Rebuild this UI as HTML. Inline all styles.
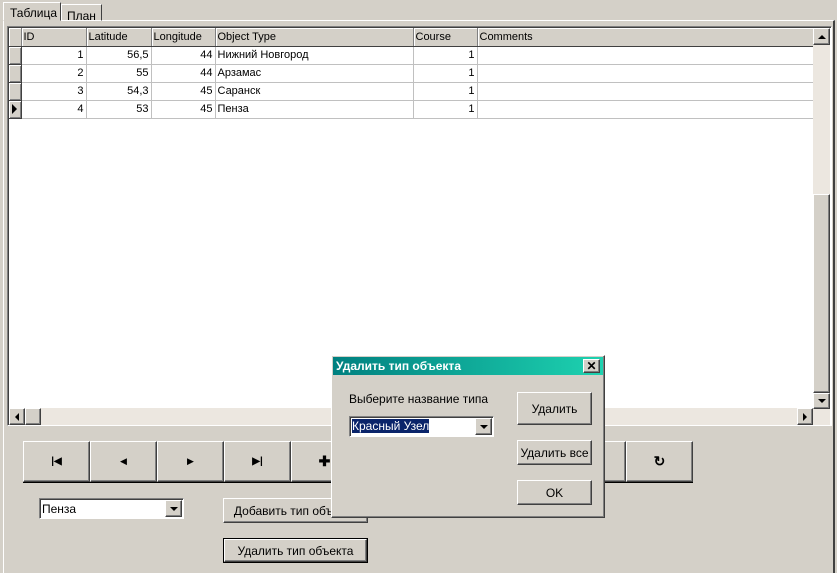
<!DOCTYPE html>
<html><head><meta charset="utf-8"><style>
*{box-sizing:border-box;margin:0;padding:0}
body{width:837px;height:573px;background:#d4d0c8;font-family:"Liberation Sans",sans-serif;font-size:11px;position:relative;overflow:hidden;color:#000}
.a{position:absolute}
.raised{background:#d4d0c8;border:1px solid;border-color:#fff #404040 #404040 #fff;box-shadow:inset -1px -1px 0 #808080}
.sunk{border:1px solid;border-color:#808080 #fff #fff #808080;box-shadow:inset 1px 1px 0 #404040}
table{border-collapse:collapse;table-layout:fixed;position:absolute;left:9px;top:28px}
td{height:18px;border-right:1px solid #c0c0c0;border-bottom:1px solid #c0c0c0;padding:0 2px;white-space:nowrap;overflow:hidden;background:#fff}
tr.h td{background:#d4d0c8;border-color:#404040;border-right:1px solid #808080;box-shadow:inset 1px 1px 0 #fff;height:18px}
td.ind{background:#d4d0c8;box-shadow:inset 1px 1px 0 #fff,inset -1px -1px 0 #808080;border-color:#404040}
.r{text-align:right}
.btn{text-align:center;display:flex;align-items:center;justify-content:center}
.arrow{width:0;height:0;border-style:solid}
</style></head><body>
<!-- tabs -->
<div class="a" style="left:3px;top:20px;width:832px;height:553px;border-left:1px solid #fff;border-top:1px solid #fff;border-right:2px solid #404040"></div>
<div class="a" style="left:61px;top:4px;width:41px;height:17px;border:1px solid;border-color:#fff #404040 transparent #fff;padding:4px 0 0 5px;font-size:12px">План</div>
<div class="a" style="left:3px;top:2px;width:58px;height:19px;border:1px solid;border-color:#fff #404040 transparent #fff;background:#d4d0c8;padding:3px 0 0 6px;font-size:12px">Таблица</div>
<!-- grid -->
<div class="a sunk" style="left:7px;top:26px;width:825px;height:400px;background:#fff"></div>
<table>
<colgroup><col style="width:12px"><col style="width:65px"><col style="width:65px"><col style="width:64px"><col style="width:198px"><col style="width:64px"><col style="width:336px"></colgroup>
<tr class="h"><td class="ind"></td><td>ID</td><td>Latitude</td><td>Longitude</td><td>Object Type</td><td>Course</td><td>Comments</td></tr>
<tr><td class="ind"></td><td class="r">1</td><td class="r">56,5</td><td class="r">44</td><td>Нижний Новгород</td><td class="r">1</td><td></td></tr>
<tr><td class="ind"></td><td class="r">2</td><td class="r">55</td><td class="r">44</td><td>Арзамас</td><td class="r">1</td><td></td></tr>
<tr><td class="ind"></td><td class="r">3</td><td class="r">54,3</td><td class="r">45</td><td>Саранск</td><td class="r">1</td><td></td></tr>
<tr><td class="ind" style="padding:0 0 0 3px"><div class="arrow" style="border-width:5px 0 5px 5px;border-color:transparent transparent transparent #000"></div></td><td class="r">4</td><td class="r">53</td><td class="r">45</td><td>Пенза</td><td class="r">1</td><td></td></tr>
</table>
<!-- v scrollbar -->
<div class="a" style="left:813px;top:28px;width:17px;height:397px;background:#ece7e0"></div>
<div class="a raised btn" style="left:813px;top:28px;width:17px;height:17px"><div class="arrow" style="border-width:0 4px 4px 4px;border-color:transparent transparent #000 transparent"></div></div>
<div class="a raised" style="left:813px;top:194px;width:17px;height:199px"></div>
<div class="a raised btn" style="left:813px;top:393px;width:17px;height:16px"><div class="arrow" style="border-width:4px 4px 0 4px;border-color:#000 transparent transparent transparent"></div></div>
<!-- h scrollbar -->
<div class="a" style="left:9px;top:408px;width:804px;height:17px;background:#ece7e0"></div>
<div class="a raised btn" style="left:9px;top:408px;width:16px;height:17px"><div class="arrow" style="border-width:4px 4px 4px 0;border-color:transparent #000 transparent transparent"></div></div>
<div class="a raised" style="left:25px;top:408px;width:16px;height:17px"></div>
<div class="a raised btn" style="left:797px;top:408px;width:16px;height:17px"><div class="arrow" style="border-width:4px 0 4px 4px;border-color:transparent transparent transparent #000"></div></div>
<!-- nav -->
<div class="a" style="left:23px;top:482px;width:670px;height:1px;background:#000"></div>
<div class="a raised btn" style="left:23px;top:441px;width:67px;height:41px;font-size:10px"><b>|◀</b></div>
<div class="a raised btn" style="left:90px;top:441px;width:67px;height:41px;font-size:9px">◀</div>
<div class="a raised btn" style="left:157px;top:441px;width:67px;height:41px;font-size:9px">▶</div>
<div class="a raised btn" style="left:224px;top:441px;width:67px;height:41px;font-size:10px"><b>▶|</b></div>
<div class="a raised btn" style="left:291px;top:441px;width:67px;height:41px;font-size:14px"><b>✚</b></div>
<div class="a raised btn" style="left:559px;top:441px;width:67px;height:41px"></div>
<div class="a raised btn" style="left:626px;top:441px;width:67px;height:41px;font-size:14px"><b>↻</b></div>
<!-- combo -->
<div class="a sunk" style="left:39px;top:498px;width:145px;height:21px;background:#fff;padding:3px 2px;font-size:12px">Пенза</div>
<div class="a raised btn" style="left:165px;top:500px;width:17px;height:17px"><div class="arrow" style="border-width:4px 4px 0 4px;border-color:#000 transparent transparent transparent"></div></div>
<div class="a raised btn" style="left:223px;top:498px;width:145px;height:25px;font-size:12px">Добавить тип объекта</div>
<div class="a btn" style="left:223px;top:538px;width:145px;height:25px;border:1px solid #000;font-size:12px"><div class="raised btn" style="width:100%;height:100%">Удалить тип объекта</div></div>
<!-- dialog -->
<div class="a raised" style="left:331px;top:355px;width:274px;height:163px;box-shadow:inset -1px -1px 0 #808080,inset 1px 1px 0 #d4d0c8"></div>
<div class="a" style="left:333px;top:357px;width:270px;height:18px;background:linear-gradient(90deg,#008080,#1ed2b0);color:#fff;font-weight:bold;font-size:12px;padding:2px 0 0 3px">Удалить тип объекта</div>
<div class="a raised btn" style="left:583px;top:359px;width:17px;height:14px;font-size:12px;font-weight:bold">✕</div>
<div class="a" style="left:349px;top:392px;font-size:12px">Выберите название типа</div>
<div class="a sunk" style="left:349px;top:416px;width:145px;height:21px;background:#fff;padding:2px 2px"><span style="background:#0a246a;color:#fff;font-size:12px">Красный Узел</span></div>
<div class="a raised btn" style="left:475px;top:418px;width:17px;height:17px"><div class="arrow" style="border-width:4px 4px 0 4px;border-color:#000 transparent transparent transparent"></div></div>
<div class="a raised btn" style="left:517px;top:392px;width:75px;height:33px;font-size:12px">Удалить</div>
<div class="a raised btn" style="left:517px;top:440px;width:75px;height:25px;font-size:12px">Удалить все</div>
<div class="a raised btn" style="left:517px;top:480px;width:75px;height:25px;font-size:12px">OK</div>
</body></html>
